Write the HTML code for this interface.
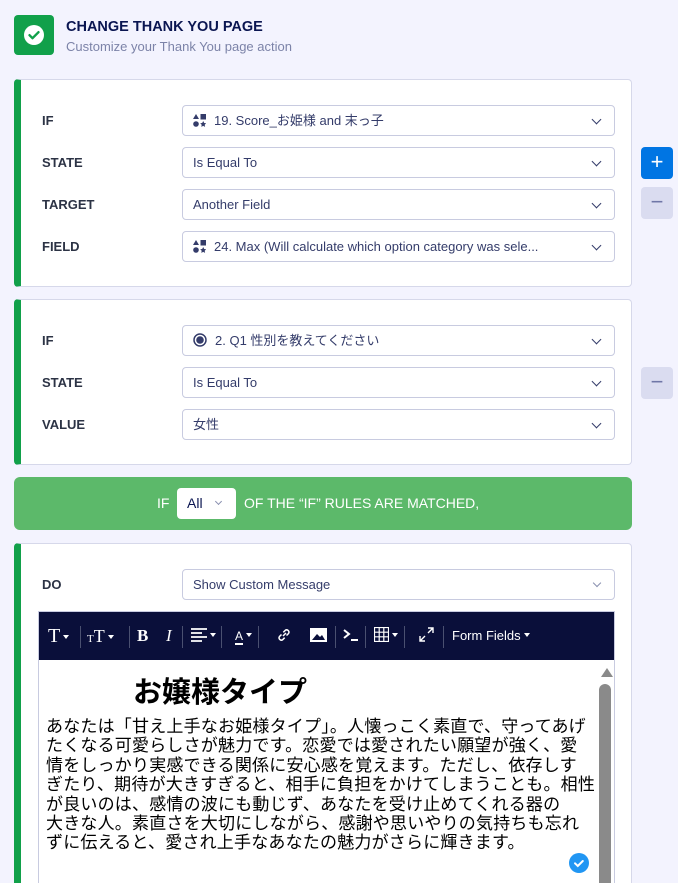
<!DOCTYPE html>
<html><head><meta charset="utf-8"><style>
*{box-sizing:border-box;margin:0;padding:0}
html,body{width:678px;height:883px;overflow:hidden}
body{background:#f3f3fe;font-family:"Liberation Sans","Noto Sans CJK JP",sans-serif;position:relative;color:#0a1551}
.abs{position:absolute}
.card{position:absolute;left:14px;width:618px;background:#fff;border:1px solid #d6d8ea;border-left:7px solid #11a04a;border-radius:4px}
.lbl{position:absolute;left:21px;font-size:13px;font-weight:bold;color:#2c3345}
.sel{position:absolute;left:161px;width:433px;height:31px;border:1px solid #c8cbe0;border-radius:4px;font-size:13px;color:#343c6a;line-height:29px;padding-left:10px;white-space:nowrap;overflow:hidden}
.sel .chev{position:absolute;right:14px;top:10px;width:7px;height:7px;border-right:1.8px solid #343c6a;border-bottom:1.8px solid #343c6a;transform:rotate(45deg)}
.ico{display:inline-block;vertical-align:-2px;margin-right:8px}
.btn{position:absolute;left:641px;width:32px;height:32px;border-radius:4px;text-align:center;line-height:30px;font-size:22px}
.tb{position:absolute;top:0;height:48px;line-height:48px;color:#fff;font-size:16px}
.sep{position:absolute;top:14px;width:1px;height:22px;background:#4a5070}
.car{display:inline-block;width:0;height:0;border-left:3.5px solid transparent;border-right:3.5px solid transparent;border-top:4px solid #fff;vertical-align:3px;margin-left:3px}
</style></head><body>
<div class="abs" style="left:14px;top:15px;width:40px;height:40px;background:#11a04a;border-radius:4px">
<svg width="40" height="40"><circle cx="20" cy="20" r="10" fill="#fff"/><path d="M15.5 20.2l3 3 6-6" stroke="#11a04a" stroke-width="2.4" fill="none" stroke-linecap="round" stroke-linejoin="round"/></svg></div>
<div class="abs" style="left:66px;top:19px;font-size:14.5px;font-weight:bold;color:#0a1551">CHANGE THANK YOU PAGE</div>
<div class="abs" style="left:66px;top:39px;font-size:13px;color:#7c83a8">Customize your Thank You page action</div>

<div class="card" style="top:79px;height:208px">
<div class="lbl" style="top:33px">IF</div>
<div class="sel" style="top:25px"><svg class="ico" width="13" height="13"><path d="M3 0L6 5H0z" fill="#343c6a"/><rect x="7.5" y="0" width="5.5" height="5.5" fill="#343c6a"/><circle cx="3" cy="10" r="2.8" fill="#343c6a"/><path d="M10.2 7l1 2 2 .3-1.5 1.4.4 2.2-1.9-1-1.9 1 .4-2.2L7.2 9.3l2-.3z" fill="#343c6a"/></svg>19. Score_お姫様 and 末っ子<span class="chev"></span></div>
<div class="lbl" style="top:75px">STATE</div>
<div class="sel" style="top:67px">Is Equal To<span class="chev"></span></div>
<div class="lbl" style="top:117px">TARGET</div>
<div class="sel" style="top:109px">Another Field<span class="chev"></span></div>
<div class="lbl" style="top:159px">FIELD</div>
<div class="sel" style="top:151px"><svg class="ico" width="13" height="13"><path d="M3 0L6 5H0z" fill="#343c6a"/><rect x="7.5" y="0" width="5.5" height="5.5" fill="#343c6a"/><circle cx="3" cy="10" r="2.8" fill="#343c6a"/><path d="M10.2 7l1 2 2 .3-1.5 1.4.4 2.2-1.9-1-1.9 1 .4-2.2L7.2 9.3l2-.3z" fill="#343c6a"/></svg>24. Max (Will calculate which option category was sele...<span class="chev"></span></div>
</div>
<div class="btn" style="top:147px;background:#0075e3;color:#fff">+</div>
<div class="btn" style="top:187px;background:#dadcf0;color:#6f76a7">−</div>

<div class="card" style="top:299px;height:166px">
<div class="lbl" style="top:33px">IF</div>
<div class="sel" style="top:25px"><svg class="ico" width="14" height="14"><circle cx="7" cy="7" r="6" fill="none" stroke="#343c6a" stroke-width="1.5"/><circle cx="7" cy="7" r="3.8" fill="#343c6a"/></svg>2. Q1 性別を教えてください<span class="chev"></span></div>
<div class="lbl" style="top:75px">STATE</div>
<div class="sel" style="top:67px">Is Equal To<span class="chev"></span></div>
<div class="lbl" style="top:117px">VALUE</div>
<div class="sel" style="top:109px">女性<span class="chev"></span></div>
</div>
<div class="btn" style="top:367px;background:#dadcf0;color:#6f76a7">−</div>

<div class="abs" style="left:14px;top:477px;width:618px;height:53px;background:#5cb96a;border-radius:6px;color:#fff;font-size:14px">
<span class="abs" style="left:143px;top:18px">IF</span>
<div class="abs" style="left:163px;top:11px;width:59px;height:31px;background:#fff;border-radius:4px;color:#0a1551;font-size:14px;line-height:31px;padding-left:10px">All<span class="abs" style="left:39px;top:11px;width:5px;height:5px;border-right:1.3px solid #8a90b0;border-bottom:1.3px solid #8a90b0;transform:rotate(45deg)"></span></div>
<span class="abs" style="left:230px;top:18px">OF THE “IF” RULES ARE MATCHED,</span>
</div>

<div class="card" style="top:543px;height:360px">
<div class="lbl" style="top:33px">DO</div>
<div class="sel" style="top:25px">Show Custom Message<span class="chev" style="border-color:#8a90b0;width:6px;height:6px;border-width:0 1.3px 1.3px 0"></span></div>
<div class="abs" style="left:17px;top:67px;width:577px;height:300px;border:1px solid #c8cbe0;background:#fff">
<div class="abs" style="left:0;top:0;width:575px;height:48px;background:#0a0f3a">
<span class="tb" style="left:9px;font-family:'Liberation Serif',serif;font-size:20px">T<span class="car"></span></span>
<div class="sep" style="left:41px"></div>
<span class="tb" style="left:48px;font-family:'Liberation Serif',serif;font-size:18px"><small style="font-size:11px">T</small>T<span class="car"></span></span>
<div class="sep" style="left:90px"></div>
<span class="tb" style="left:98px;font-family:'Liberation Serif',serif;font-weight:bold;font-size:17px">B</span>
<span class="tb" style="left:127px;font-family:'Liberation Serif',serif;font-style:italic;font-size:17px">I</span>
<div class="sep" style="left:143px"></div>
<span class="tb" style="left:152px"><svg width="16" height="14" style="vertical-align:-2px"><path d="M0 1h16M0 5h11M0 9h16M0 13h11" stroke="#fff" stroke-width="1.8"/></svg><span class="car"></span></span>
<div class="sep" style="left:182px"></div>
<span class="tb" style="left:196px;font-size:12px"><span style="border-bottom:2px solid #fff">A</span><span class="car"></span></span>
<div class="sep" style="left:219px"></div>
<span class="tb" style="left:237px"><svg width="16" height="16" style="vertical-align:-3px"><path d="M7 9l3-3M5.5 7.5l-2 2a2.3 2.3 0 003.2 3.2l2-2M10.5 8.5l2-2a2.3 2.3 0 00-3.2-3.2l-2 2" stroke="#fff" stroke-width="1.5" fill="none"/></svg></span>
<span class="tb" style="left:271px"><svg width="17" height="14" style="vertical-align:-2px"><rect width="17" height="14" fill="#fff"/><path d="M2 12l5-6 3 3 2-2 3 5z" fill="#0a0f3a"/></svg></span>
<div class="sep" style="left:296px"></div>
<span class="tb" style="left:304px"><svg width="16" height="14" style="vertical-align:-2px"><path d="M1 2l5 4-5 4M8 12h7" stroke="#fff" stroke-width="2" fill="none"/></svg></span>
<div class="sep" style="left:326px"></div>
<span class="tb" style="left:335px"><svg width="15" height="15" style="vertical-align:-2px"><path d="M.5.5h14v14H.5zM5.2.5v14M9.8.5v14M.5 5.2h14M.5 9.8h14" stroke="#fff" stroke-width="1.2" fill="none"/></svg><span class="car"></span></span>
<div class="sep" style="left:365px"></div>
<span class="tb" style="left:380px"><svg width="15" height="15" style="vertical-align:-2px"><path d="M9 1h5v5M14 1L9 6M6 14H1V9M1 14l5-5" stroke="#fff" stroke-width="1.4" fill="none"/></svg></span>
<div class="sep" style="left:404px"></div>
<span class="tb" style="left:413px;font-size:13px">Form Fields<span class="car"></span></span>
</div>
<div class="abs" style="left:562px;top:56px;width:0;height:0;border-left:6px solid transparent;border-right:6px solid transparent;border-bottom:9px solid #8a8a8a"></div>
<div class="abs" style="left:560px;top:72px;width:12px;height:240px;background:#8a8a8a;border-radius:6px"></div>
<div class="abs" style="left:94px;top:57px;font-size:29px;font-weight:bold;color:#000">お嬢様タイプ</div>
<div class="abs" style="left:7px;top:103px;font-size:17px;line-height:19.4px;color:#000;white-space:nowrap;letter-spacing:0.2px;font-family:'WenQuanYi Zen Hei','Noto Sans CJK JP',sans-serif">あなたは「甘え上手なお姫様タイプ」。人懐っこく素直で、守ってあげ<br>たくなる可愛らしさが魅力です。恋愛では愛されたい願望が強く、愛<br>情をしっかり実感できる関係に安心感を覚えます。ただし、依存しす<br>ぎたり、期待が大きすぎると、相手に負担をかけてしまうことも。相性<br>が良いのは、感情の波にも動じず、あなたを受け止めてくれる器の<br>大きな人。素直さを大切にしながら、感謝や思いやりの気持ちも忘れ<br>ずに伝えると、愛され上手なあなたの魅力がさらに輝きます。</div>
<svg class="abs" style="left:529px;top:240px" width="22" height="22"><circle cx="11" cy="11" r="10" fill="#2196f3"/><path d="M7 11.3l2.8 2.7 5-5" stroke="#fff" stroke-width="2" fill="none" stroke-linecap="round"/></svg>
</div>
</div>
</body></html>
